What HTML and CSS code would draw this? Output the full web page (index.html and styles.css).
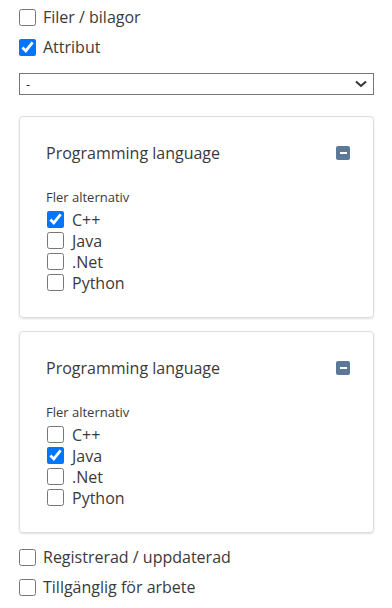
FILE: index.html
```html
<!DOCTYPE html>
<html lang="sv">
<head>
    <meta charset="UTF-8">
    <meta name="viewport" content="width=device-width, initial-scale=1.0">
    <title>Filter</title>
    <link rel="stylesheet" href="styles.css">
</head>
<body>
    <div class="filters">
        <label class="check-row"><input type="checkbox"> Filer / bilagor</label>
        <label class="check-row"><input type="checkbox" checked> Attribut</label>

        <select class="attr-select">
            <option>-</option>
        </select>

        <div class="card">
            <div class="card-head">
                <span class="card-title">Programming language</span>
                <button class="collapse-btn" title="Minimera"><span></span></button>
            </div>
            <div class="hint">Fler alternativ</div>
            <label class="option"><input type="checkbox" checked> C++</label>
            <label class="option"><input type="checkbox"> Java</label>
            <label class="option"><input type="checkbox"> .Net</label>
            <label class="option"><input type="checkbox"> Python</label>
        </div>

        <div class="card">
            <div class="card-head">
                <span class="card-title">Programming language</span>
                <button class="collapse-btn" title="Minimera"><span></span></button>
            </div>
            <div class="hint">Fler alternativ</div>
            <label class="option"><input type="checkbox"> C++</label>
            <label class="option"><input type="checkbox" checked> Java</label>
            <label class="option"><input type="checkbox"> .Net</label>
            <label class="option"><input type="checkbox"> Python</label>
        </div>

        <label class="check-row bottom"><input type="checkbox"> Registrerad / uppdaterad</label>
        <label class="check-row"><input type="checkbox"> Tillgänglig för arbete</label>
    </div>
</body>
</html>
```

FILE: styles.css
```css
body { margin: 0; font-family: "Open Sans", "Liberation Sans", sans-serif; color: #3a3a3a; background: #fff; }
.filters { padding: 2px 18px 0 19px; display: flex; flex-direction: column; }
.check-row { display: flex; align-items: center; gap: 7px; height: 30px; font-size: 16px; }
.check-row input { width: 17px; height: 17px; margin: 0; accent-color: #0075ff; }
.check-row.bottom { margin-top: 9px; }
.attr-select {
    margin-top: 11px; height: 22px; font-family: inherit; font-size: 13px; color: #333;
    border: 1px solid #767676; border-radius: 0; padding: 0 4px 0 6px;
    appearance: none; -webkit-appearance: none;
    background: #fff url("data:image/svg+xml;utf8,<svg xmlns='http://www.w3.org/2000/svg' width='12' height='8' viewBox='0 0 12 8'><path d='M1 1.5l5 4.5 5-4.5' fill='none' stroke='%23333' stroke-width='2'/></svg>") no-repeat right 6px center;
}
.card { margin-top: 21px; border: 1px solid #ddd; border-radius: 4px; box-shadow: 0 1px 2px rgba(0, 0, 0, 0.12); padding: 25px 23px 24px 26px; }
.card + .card { margin-top: 13px; }
.card-head { display: flex; justify-content: space-between; align-items: center; height: 22px; }
.card-title { font-size: 16px; }
.collapse-btn { width: 14px; height: 14px; padding: 0; border: none; border-radius: 2px; background: #5b7896; display: flex; align-items: center; justify-content: center; cursor: pointer; }
.collapse-btn span { width: 7px; height: 2px; background: #fff; }
.hint { margin-top: 24px; font-size: 13px; line-height: 18px; }
.option { display: flex; align-items: center; gap: 8px; height: 21px; font-size: 16px; padding-left: 1px; }
.option:first-of-type { margin-top: 3px; }
.option input { width: 17px; height: 17px; margin: 0; accent-color: #0075ff; }
```
